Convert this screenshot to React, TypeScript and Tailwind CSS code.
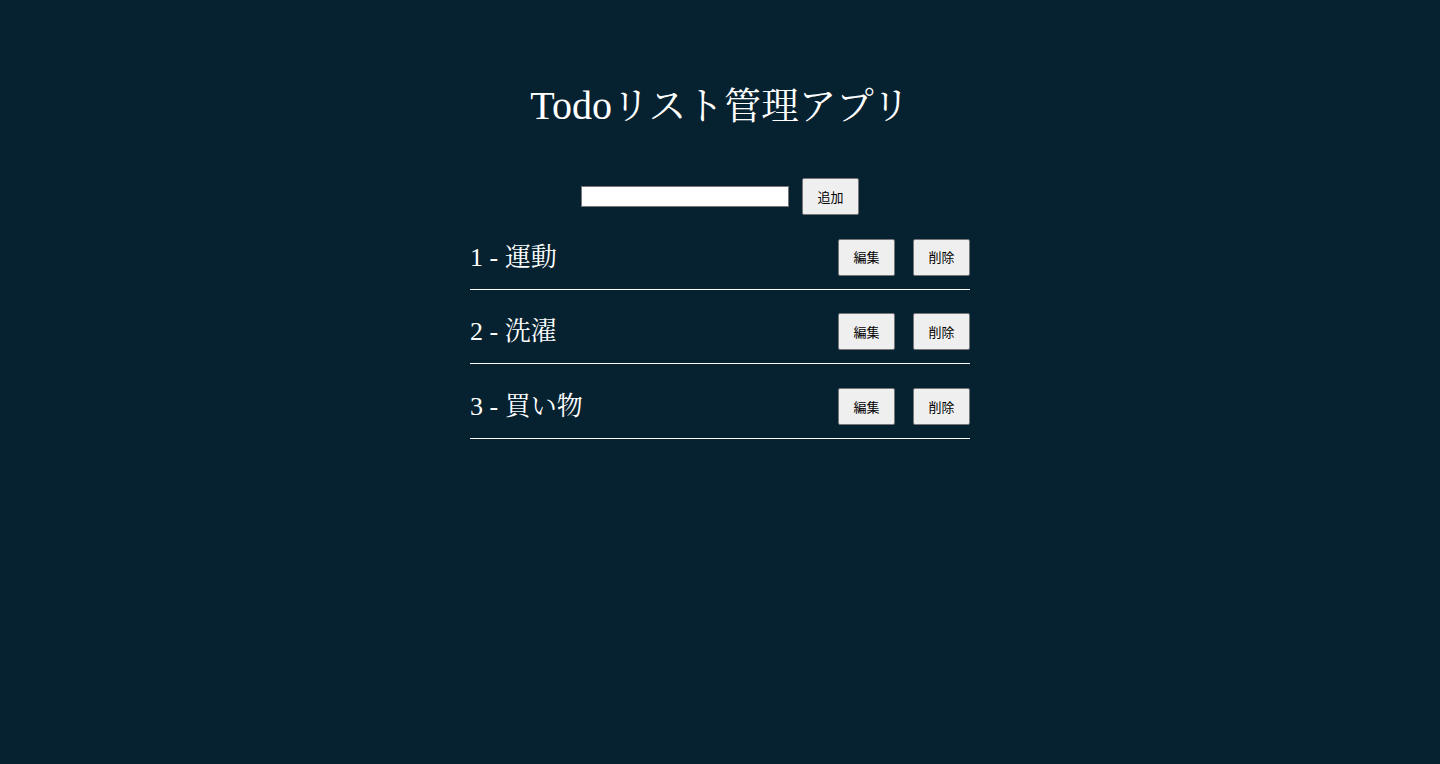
const todos = [
  { id: 1, title: '運動' },
  { id: 2, title: '洗濯' },
  { id: 3, title: '買い物' },
];

const serif = "font-['Liberation_Serif','Noto_Serif_CJK_JP','Noto_Sans_CJK_JP',serif]";
const sans = "font-['Noto_Sans_CJK_JP','Liberation_Sans',sans-serif]";

function SmallButton({ label }: { label: string }) {
  return (
    <button
      type="button"
      className={`${sans} box-border flex h-[37px] w-[57px] items-center justify-center rounded-[2px] border border-[#767676] bg-[#efefef] text-[13px] text-black`}
    >
      {label}
    </button>
  );
}

export default function App() {
  return (
    <main className="min-h-screen w-full bg-[#06212f] pt-[82px] text-white">
      <h1 className={`${serif} text-center text-[40px] leading-[48px] font-normal`}>
        Todo<span className="text-[37.5px]">リスト管理アプリ</span>
      </h1>

      <div className="mt-[47px] flex items-center justify-center gap-[13px]">
        <input
          type="text"
          className="h-[21px] w-[208px] border border-[#767676] bg-white px-1 text-sm text-black outline-none"
        />
        <SmallButton label="追加" />
      </div>

      <ul className="mx-auto w-[500px]">
        {todos.map((todo) => (
          <li
            key={todo.id}
            className="flex h-[74.67px] items-center justify-between border-b border-white pt-[23.5px] pb-[13.17px]"
          >
            <span className={`${serif} text-[26px] leading-[37px]`}>
              {todo.id} - {todo.title}
            </span>
            <div className="flex gap-[18px]">
              <SmallButton label="編集" />
              <SmallButton label="削除" />
            </div>
          </li>
        ))}
      </ul>
    </main>
  );
}
